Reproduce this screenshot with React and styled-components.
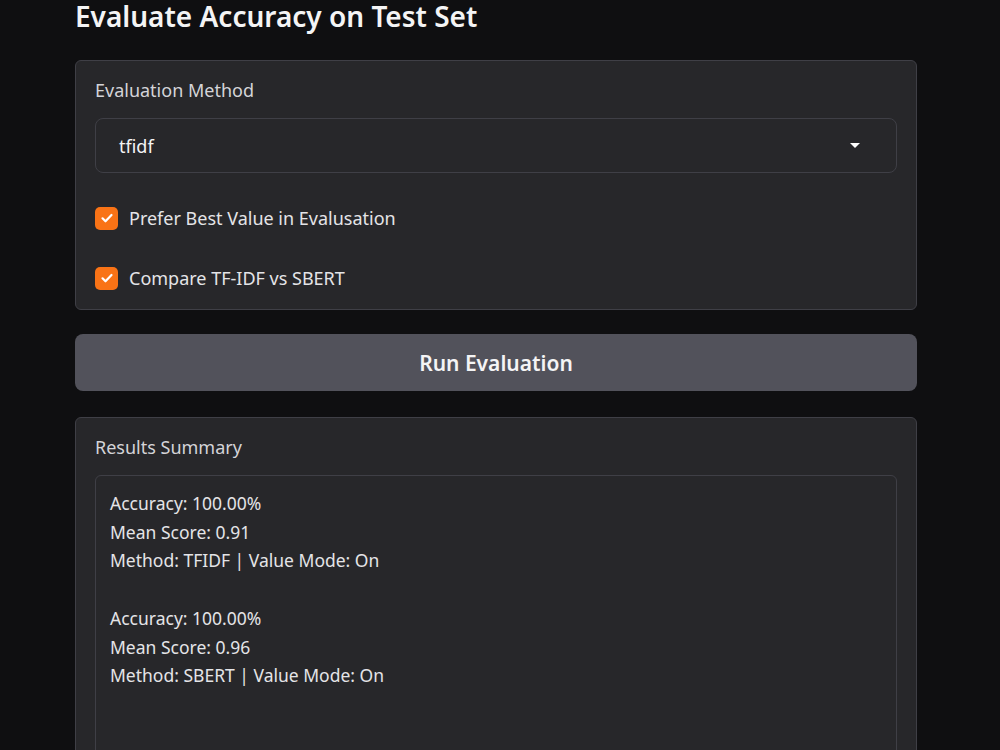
import styled, { createGlobalStyle } from "styled-components";

const GlobalStyle = createGlobalStyle`
    html, body {
        margin: 0;
        padding: 0;
        background: #0f0f11;
    }
    body {
        font-family: "Noto Sans", Lato, sans-serif;
        color: #e4e4e7;
    }
`;

const Page = styled.main`
    width: 842px;
    margin: 0 auto;
    display: flex;
    flex-direction: column;
    gap: 24px;
    transform: translateX(-4px);
`;

const Title = styled.h1`
    margin: 0 0 4px;
    font-size: 28px;
    font-weight: 600;
    line-height: 32px;
    color: #f4f4f5;
`;

const Panel = styled.section`
    background: #27272a;
    border: 1px solid #3f3f46;
    border-radius: 6px;
    padding: 17px 19px 18px;
    display: flex;
    flex-direction: column;
`;

const Label = styled.div`
    font-size: 18px;
    line-height: 24px;
    color: #d4d4d8;
    margin-bottom: 16px;
`;

const Select = styled.div`
    height: 55px;
    box-sizing: border-box;
    border: 1px solid #3f3f46;
    border-radius: 8px;
    padding: 0 36px 0 23px;
    display: flex;
    align-items: center;
    justify-content: space-between;
    font-size: 18px;
    color: #f4f4f5;
`;

const Arrow = styled.span`
    width: 0;
    height: 0;
    border-left: 5px solid transparent;
    border-right: 5px solid transparent;
    border-top: 5px solid #ffffff;
`;

const Checks = styled.div`
    display: flex;
    flex-direction: column;
    gap: 36px;
    margin-top: 33px;
    margin-bottom: 1px;
`;

const CheckRow = styled.label`
    display: flex;
    align-items: center;
    gap: 11px;
    font-size: 18px;
    line-height: 24px;
    color: #e4e4e7;
`;

const Box = styled.span`
    width: 23px;
    height: 23px;
    border-radius: 5px;
    background: ${(p) => (p.checked ? "#f97316" : "transparent")};
    display: flex;
    align-items: center;
    justify-content: center;
`;

const RunButton = styled.button`
    height: 57px;
    border: none;
    border-radius: 8px;
    background: #52525b;
    color: #f4f4f5;
    font-family: inherit;
    font-size: 21px;
    font-weight: 600;
    cursor: pointer;
`;

const Output = styled.div`
    border: 1px solid #3f3f46;
    border-radius: 6px;
    padding: 13px 14px;
    height: 320px;
    font-size: 17.5px;
    line-height: 28.7px;
    color: #e4e4e7;
    white-space: pre-wrap;
`;

const Check = () => (
    <svg width="14" height="14" viewBox="0 0 14 14" fill="none">
        <path d="M2.5 7.3l3 3 6-6.3" stroke="#fff" strokeWidth="2.2" strokeLinecap="round" strokeLinejoin="round" />
    </svg>
);

const results = `Accuracy: 100.00%
Mean Score: 0.91
Method: TFIDF | Value Mode: On

Accuracy: 100.00%
Mean Score: 0.96
Method: SBERT | Value Mode: On`;

export default function App() {
    return (
        <>
            <GlobalStyle />
            <Page>
                <Title>Evaluate Accuracy on Test Set</Title>
                <Panel>
                    <Label>Evaluation Method</Label>
                    <Select>
                        <span>tfidf</span>
                        <Arrow />
                    </Select>
                    <Checks>
                        <CheckRow>
                            <Box checked>
                                <Check />
                            </Box>
                            Prefer Best Value in Evalusation
                        </CheckRow>
                        <CheckRow>
                            <Box checked>
                                <Check />
                            </Box>
                            Compare TF-IDF vs SBERT
                        </CheckRow>
                    </Checks>
                </Panel>
                <RunButton>Run Evaluation</RunButton>
                <Panel style={{ marginTop: 2 }}>
                    <Label>Results Summary</Label>
                    <Output>{results}</Output>
                </Panel>
            </Page>
        </>
    );
}
